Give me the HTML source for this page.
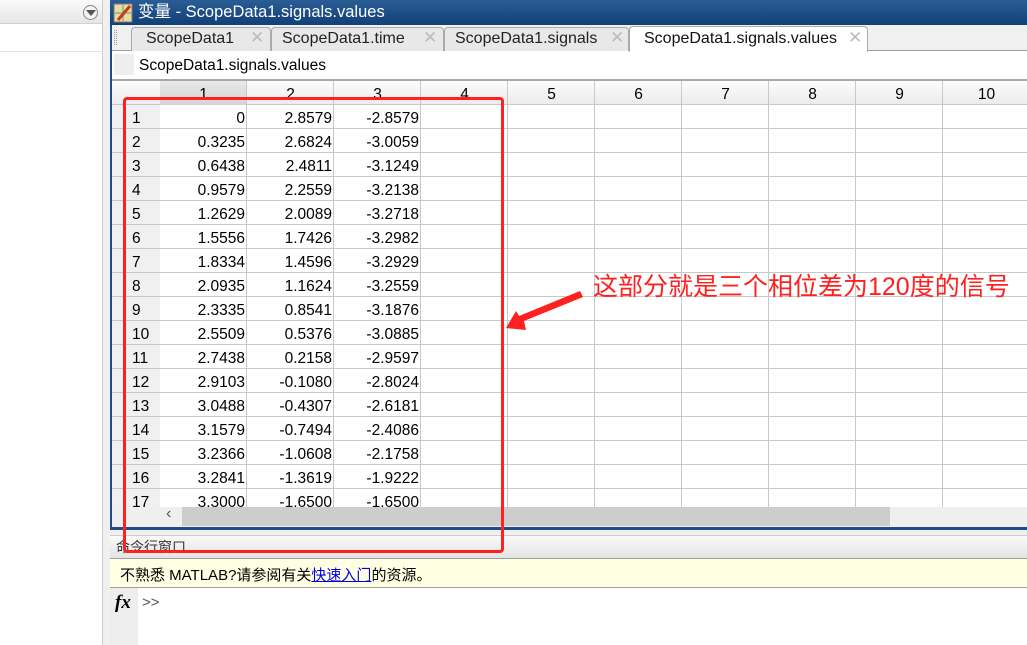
<!DOCTYPE html>
<html><head><meta charset="utf-8"><style>
*{margin:0;padding:0;box-sizing:border-box}
body{width:1027px;height:645px;overflow:hidden;background:#fff;position:relative;font-family:"Liberation Sans","Noto Sans CJK SC",sans-serif;font-size:15px;color:#000}
.a{position:absolute}
.cell{position:absolute;height:24px;line-height:24px;text-align:right;padding-right:2px;font-size:15px}
</style></head><body>
<!-- left panel -->
<div class="a" style="left:0;top:0;width:103px;height:24px;background:linear-gradient(#fafafa,#e6e6e6);border-bottom:1px solid #d0d0d0"></div>
<div class="a" style="left:83px;top:5px;width:15px;height:15px;border:1px solid #888;border-radius:50%;background:#f4f4f4"></div>
<div class="a" style="left:86px;top:10px;width:0;height:0;border-left:5px solid transparent;border-right:5px solid transparent;border-top:6px solid #555"></div>
<div class="a" style="left:0;top:51px;width:102px;height:1px;background:#e4e4e4"></div>
<div class="a" style="left:102px;top:0;width:1px;height:645px;background:#d0d0d0"></div>
<div class="a" style="left:103px;top:0;width:7px;height:645px;background:#f0f0f0"></div>
<!-- title bar -->
<div class="a" style="left:110px;top:0;width:917px;height:25px;background:linear-gradient(#2a5d95,#123f78)"></div>
<svg class="a" style="left:113px;top:3px" width="20" height="20"><rect x="1" y="1" width="18" height="18" fill="#e8dca0" stroke="#777"/><path d="M2 10H18M10 2V18" stroke="#888"/><path d="M5 17L17 3" stroke="#c04010" stroke-width="3"/></svg>
<div class="a" style="left:138px;top:2px;color:#fff;font-size:16.5px;line-height:20px">变量 - ScopeData1.signals.values</div>
<!-- tabs -->
<div class="a" style="left:110px;top:25px;width:917px;height:26px;background:#f0f0f0;border-bottom:1px solid #a0a0a0"></div>
<div class="a" style="left:114px;top:30px;width:3px;height:15px;border-left:1px dotted #999;border-right:1px dotted #999"></div>
<div class="a" style="left:131px;top:27px;width:140px;height:24px;background:#e8e8e8;border:1px solid #aaa;border-bottom:none;border-radius:4px 4px 0 0"></div>
<div class="a" style="left:146px;top:29px;color:#222;font-size:16px;line-height:20px">ScopeData1</div>
<div class="a" style="left:250px;top:28px;color:#bbb;font-size:17px">✕</div>
<div class="a" style="left:271px;top:27px;width:173px;height:24px;background:#e8e8e8;border:1px solid #aaa;border-bottom:none;border-radius:4px 4px 0 0"></div>
<div class="a" style="left:282px;top:29px;color:#222;font-size:16px;line-height:20px">ScopeData1.time</div>
<div class="a" style="left:423px;top:28px;color:#bbb;font-size:17px">✕</div>
<div class="a" style="left:444px;top:27px;width:185px;height:24px;background:#e8e8e8;border:1px solid #aaa;border-bottom:none;border-radius:4px 4px 0 0"></div>
<div class="a" style="left:455px;top:29px;color:#222;font-size:16px;line-height:20px">ScopeData1.signals</div>
<div class="a" style="left:610px;top:28px;color:#bbb;font-size:17px">✕</div>
<div class="a" style="left:629px;top:26px;width:239px;height:26px;background:#fff;border:1px solid #aaa;border-bottom:none;border-radius:4px 4px 0 0"></div>
<div class="a" style="left:644px;top:29px;color:#111;font-size:16px;line-height:20px">ScopeData1.signals.values</div>
<div class="a" style="left:848px;top:28px;color:#bbb;font-size:17px">✕</div>
<!-- label bar -->
<div class="a" style="left:114px;top:54px;width:20px;height:21px;background:#eee"></div>
<div class="a" style="left:139px;top:57px;font-size:15.5px">ScopeData1.signals.values</div>
<div class="a" style="left:110px;top:79px;width:917px;height:2px;background:#a8a8a8"></div>
<!-- blue frame -->
<div class="a" style="left:110px;top:25px;width:2px;height:505px;background:#1e4f8a"></div>
<div class="a" style="left:110px;top:527px;width:917px;height:3px;background:#1e4f8a"></div>
<!-- grid -->
<div class="a" style="left:112px;top:81px;width:915px;height:24px;background:linear-gradient(#fcfcfc,#ececec);border-bottom:1px solid #c8c8c8"></div>
<div class="a" style="left:160px;top:81px;width:87px;height:24px;background:linear-gradient(#e8e8e8,#d4d4d4)"></div>
<div class="a" style="left:112px;top:105px;width:48px;height:402px;background:#f0f0f0"></div>
<div id="g"></div>
<!-- scrollbar -->
<div class="a" style="left:112px;top:507px;width:915px;height:20px;background:#efefef"></div>
<div class="a" style="left:182px;top:507px;width:708px;height:19px;background:#cdcdcd"></div>
<div class="a" style="left:166px;top:505px;color:#555;font-size:16px">‹</div>
<!-- command window -->
<div class="a" style="left:110px;top:530px;width:917px;height:5px;background:#f0f0f0"></div>
<div class="a" style="left:110px;top:535px;width:917px;height:24px;background:linear-gradient(#fafafa,#e4e4e4);border-top:1px solid #ccc;border-bottom:1px solid #a0a0a0"></div>
<div class="a" style="left:116px;top:537px;font-size:14px;color:#333">命令行窗口</div>
<div class="a" style="left:110px;top:559px;width:917px;height:29px;background:#ffffe4;border-bottom:1px solid #a0a0a0"></div>
<div class="a" style="left:120px;top:564px;font-size:15px">不熟悉 MATLAB?请参阅有关<span style="color:#0000ee;text-decoration:underline">快速入门</span>的资源。</div>
<div class="a" style="left:110px;top:588px;width:28px;height:57px;background:#ededed"></div>
<div class="a" style="left:115px;top:592px;font-family:'Liberation Serif',serif;font-style:italic;font-weight:bold;font-size:19px">fx</div>
<div class="a" style="left:142px;top:594px;color:#555;font-size:15px">&gt;&gt;</div>
<!-- annotation -->
<div class="a" style="left:123px;top:97px;width:381px;height:456px;border:3px solid #ff2020;border-radius:4px"></div>
<svg class="a" style="left:0;top:0" width="1027" height="645"><polygon points="580,291 583,297 524,321 526,330 506,328 516,311 519,316" fill="#ff2020"/></svg>
<div class="a" style="left:593px;top:272px;color:#ff2020;font-size:25px;line-height:30px;font-family:'Liberation Sans','Noto Sans CJK SC',sans-serif">这部分就是三个相位差为120度的信号</div>
<script>
var d=[["0","2.8579","-2.8579"],["0.3235","2.6824","-3.0059"],["0.6438","2.4811","-3.1249"],["0.9579","2.2559","-3.2138"],["1.2629","2.0089","-3.2718"],["1.5556","1.7426","-3.2982"],["1.8334","1.4596","-3.2929"],["2.0935","1.1624","-3.2559"],["2.3335","0.8541","-3.1876"],["2.5509","0.5376","-3.0885"],["2.7438","0.2158","-2.9597"],["2.9103","-0.1080","-2.8024"],["3.0488","-0.4307","-2.6181"],["3.1579","-0.7494","-2.4086"],["3.2366","-1.0608","-2.1758"],["3.2841","-1.3619","-1.9222"],["3.3000","-1.6500","-1.6500"]];
var h="";
for(var c=0;c<10;c++){var x=160+87*c;h+='<div class="a" style="left:'+(x+86)+'px;top:81px;width:1px;height:426px;background:#c8c8c8"></div>';h+='<div class="a" style="left:'+x+'px;top:86px;width:87px;text-align:center;font-size:15.5px">'+(c+1)+'</div>';}
for(var r=0;r<17;r++){var y=105+24*r;h+='<div class="a" style="left:112px;top:'+(y+23)+'px;width:915px;height:1px;background:#c8c8c8"></div>';h+='<div class="a" style="left:132px;top:'+(y+5)+'px;font-size:15.5px">'+(r+1)+'</div>';for(var c=0;c<3;c++)h+='<div class="cell" style="left:'+(160+87*c)+'px;top:'+(y+2)+'px;width:87px;padding-right:2px;font-size:15.5px">'+d[r][c]+'</div>';}
document.getElementById("g").innerHTML=h;
</script>
</body></html>
